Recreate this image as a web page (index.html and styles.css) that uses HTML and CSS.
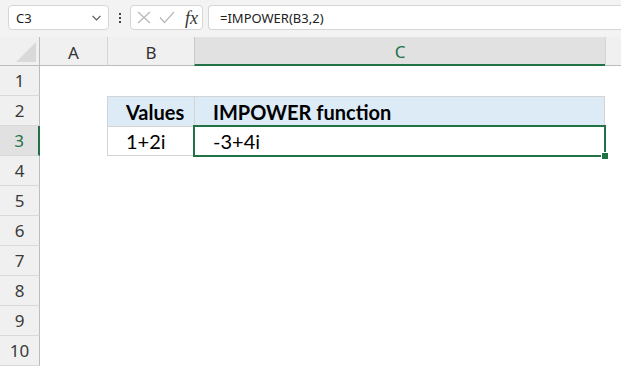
FILE: index.html
```html
<!DOCTYPE html>
<html>
<head>
<meta charset="utf-8">
<link rel="stylesheet" href="styles.css">
</head>
<body>
<div class="toolbar">
  <div class="namebox">
    <span class="nb-text">C3</span>
    <svg class="chev" width="9" height="6" viewBox="0 0 9 6"><path d="M0.5 0.8 L4.5 4.8 L8.5 0.8" fill="none" stroke="#555" stroke-width="1.2"/></svg>
  </div>
  <div class="dots"><i></i><i></i><i></i></div>
  <div class="fxbox">
    <svg class="ico" width="14" height="13" viewBox="0 0 14 13"><path d="M1 1 L13 12 M13 1 L1 12" stroke="#b8b8b8" stroke-width="1.2" fill="none"/></svg>
    <svg class="ico check" width="16" height="13" viewBox="0 0 16 13"><path d="M1 6.5 L5.5 11.5 L15 1" stroke="#b8b8b8" stroke-width="1.2" fill="none"/></svg>
    <span class="fx">fx</span>
  </div>
  <div class="formula">=IMPOWER(B3,2)</div>
</div>
<div class="sheet">
  <div class="corner"><span class="tri"></span></div>
  <div class="ch">A</div>
  <div class="ch bl">B</div>
  <div class="ch bl sel-col">C</div>
  <div class="ch bl"></div>

  <div class="rh">1</div><div class="c"></div><div class="c"></div><div class="c"></div><div class="c"></div>
  <div class="rh">2</div><div class="c"></div><div class="c t hd">Values</div><div class="c t hd tr">IMPOWER function</div><div class="c"></div>
  <div class="rh sel-row">3</div><div class="c"></div><div class="c t b">1+2i</div><div class="c t tr b active">-3+4i<span class="selbox"></span><span class="handle"></span></div><div class="c"></div>
  <div class="rh">4</div><div class="c"></div><div class="c"></div><div class="c"></div><div class="c"></div>
  <div class="rh">5</div><div class="c"></div><div class="c"></div><div class="c"></div><div class="c"></div>
  <div class="rh">6</div><div class="c"></div><div class="c"></div><div class="c"></div><div class="c"></div>
  <div class="rh">7</div><div class="c"></div><div class="c"></div><div class="c"></div><div class="c"></div>
  <div class="rh">8</div><div class="c"></div><div class="c"></div><div class="c"></div><div class="c"></div>
  <div class="rh">9</div><div class="c"></div><div class="c"></div><div class="c"></div><div class="c"></div>
  <div class="rh">10</div><div class="c"></div><div class="c"></div><div class="c"></div><div class="c"></div>
</div>
</body>
</html>
```
FILE: styles.css
```css
* { box-sizing: border-box; }
html, body { margin: 0; padding: 0; }
body {
  width: 621px;
  height: 368px;
  overflow: hidden;
  background: #ffffff;
  font-family: "Noto Sans", "Open Sans", sans-serif;
}
.toolbar {
  height: 37px;
  background: #f3f3f3;
  display: flex;
  align-items: flex-start;
  padding: 5px 0 0 8px;
}
.namebox {
  width: 101px;
  height: 25px;
  background: #fff;
  border: 1px solid #d6d6d6;
  border-radius: 4px;
  display: flex;
  align-items: center;
  justify-content: space-between;
  padding: 0 7px 0 7px;
  font-size: 13px;
  color: #222;
}
.chev { margin-top: 1px; }
.dots {
  width: 21px;
  height: 25px;
  display: flex;
  flex-direction: column;
  align-items: center;
  justify-content: center;
  gap: 2px;
}
.dots i { display: block; width: 2px; height: 2px; background: #444; }
.fxbox {
  width: 73px;
  height: 25px;
  background: #fff;
  border: 1px solid #d6d6d6;
  border-radius: 4px;
  display: flex;
  align-items: center;
  padding-left: 6px;
}
.ico { display: block; }
.check { margin-left: 8px; }
.fx {
  margin-left: 10px;
  font-family: "Liberation Serif", serif;
  font-style: italic;
  font-size: 18px;
  color: #333;
  line-height: 1;
}
.formula {
  margin-left: 5px;
  flex: 1;
  height: 25px;
  background: #fff;
  border: 1px solid #d6d6d6;
  border-right: none;
  border-radius: 4px 0 0 4px;
  font-size: 13px;
  color: #222;
  display: flex;
  align-items: center;
  padding-left: 11px;
}
.sheet {
  display: grid;
  grid-template-columns: 40px 67px 87px 411px 1fr;
  grid-template-rows: 29px repeat(10, 30px);
}
.corner {
  background: #f0f0f0;
  border-right: 1px solid #bcbcbc;
  border-bottom: 1px solid #bcbcbc;
  position: relative;
}
.tri {
  position: absolute;
  right: 3px;
  bottom: 3px;
  width: 0;
  height: 0;
  border-left: 20px solid transparent;
  border-bottom: 20px solid #d9d9d9;
}
.ch {
  background: #f0f0f0;
  border-bottom: 1px solid #bcbcbc;
  display: flex;
  align-items: center;
  justify-content: center;
  font-size: 17px;
  color: #333;
  padding-top: 2px;
}
.ch.bl { border-left: 1px solid #d4d4d4; }
.ch.sel-col {
  background: #e1e1e1;
  color: #217346;
  border-bottom: 2px solid #217346;
  border-left-color: #c8c8c8;
}
.rh {
  background: #f0f0f0;
  border-right: 1px solid #bcbcbc;
  border-bottom: 1px solid #d9d9d9;
  display: flex;
  align-items: center;
  justify-content: center;
  font-size: 17px;
  color: #3a3a3a;
}
.rh.sel-row {
  background: #e1e1e1;
  color: #217346;
  border-right: 2px solid #217346;
}
.c { background: #fff; }
.t {
  font-family: "Lato", "Liberation Sans", sans-serif;
  font-size: 20px;
  color: #000;
  border-left: 1px solid #d4d4d4;
  border-top: 1px solid #d4d4d4;
  display: flex;
  align-items: flex-end;
  padding: 0 0 4px 18px;
  line-height: 1;
}
.t.tr { border-right: 1px solid #d4d4d4; }
.t.b { border-bottom: 1px solid #d4d4d4; }
.hd { background: #ddebf7; font-weight: bold; }
.active { position: relative; }
.selbox {
  position: absolute;
  left: -2px;
  top: -2px;
  right: -2px;
  bottom: -2px;
  border: 2px solid #217346;
}
.handle {
  position: absolute;
  right: -5px;
  bottom: -5px;
  width: 8px;
  height: 8px;
  background: #217346;
  border: 1px solid #fff;
}
```
